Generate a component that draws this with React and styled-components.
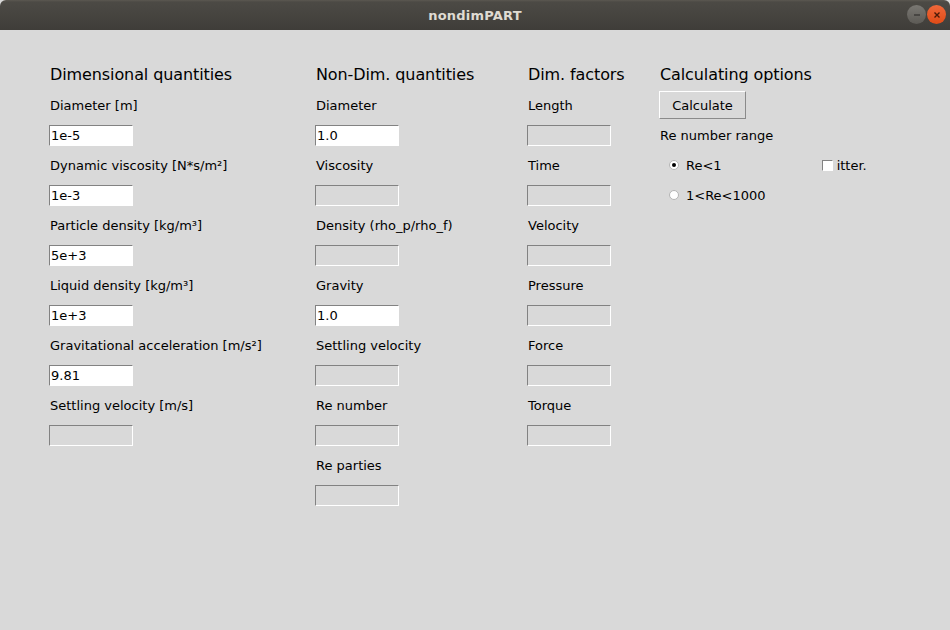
import styled, { createGlobalStyle } from 'styled-components';

const GlobalStyle = createGlobalStyle`
  html, body {
    margin: 0;
    padding: 0;
    background: #d9d9d9;
  }
  body {
    font-family: "DejaVu Sans", "Liberation Sans", sans-serif;
    color: #000;
  }
`;

const Window = styled.div`
  width: 950px;
  height: 630px;
  display: flex;
  flex-direction: column;
  background: #d9d9d9;
  overflow: hidden;
`;

const TitleBar = styled.div`
  height: 30px;
  flex: none;
  position: relative;
  display: flex;
  align-items: center;
  justify-content: center;
  background: linear-gradient(#5b5851 0px, #4c4a45 2px, #3f3d39 30px);
  border-radius: 6px 6px 0 0;
`;

const Title = styled.span`
  font-size: 13px;
  font-weight: bold;
  color: #dfdbd2;
  letter-spacing: 0.2px;
`;

const Controls = styled.div`
  position: absolute;
  right: 4px;
  top: 5px;
  display: flex;
  gap: 1px;
`;

const CircleButton = styled.div`
  width: 19px;
  height: 19px;
  border-radius: 50%;
  background: ${(p) => (p.close ? 'linear-gradient(#f0683a, #df4b17)' : 'linear-gradient(#7a7873, #5c5a55)')};
  display: flex;
  align-items: center;
  justify-content: center;
`;

const Body = styled.div`
  flex: 1;
  display: flex;
  padding: 30px 0 0 50px;
`;

const Column = styled.div`
  width: ${(p) => p.width}px;
  display: flex;
  flex-direction: column;
  flex: none;
`;

const Heading = styled.div`
  height: 30px;
  line-height: 30px;
  font-size: 16px;
  letter-spacing: -0.1px;
`;

const Label = styled.div`
  height: 30px;
  line-height: 32px;
  font-size: 13px;
  white-space: pre;
`;

const FieldRow = styled.div`
  height: 30px;
  display: flex;
  align-items: center;
`;

const Entry = styled.input`
  box-sizing: border-box;
  width: 84px;
  height: 21px;
  margin: 0 0 0 -1px;
  padding: 0 1px;
  font-family: "DejaVu Sans", sans-serif;
  font-size: 13px;
  color: #000;
  background: ${(p) => (p.disabled ? '#d9d9d9' : '#ffffff')};
  border-style: solid;
  border-width: 1px;
  border-color: #828282 #ffffff #ffffff #828282;
  outline: none;
`;

const ButtonRow = styled.div`
  height: 30px;
  display: flex;
  align-items: center;
`;

const Button = styled.button`
  box-sizing: border-box;
  width: 87px;
  height: 28px;
  margin-left: -1px;
  font-family: "DejaVu Sans", sans-serif;
  font-size: 13px;
  color: #000;
  background: #d9d9d9;
  border-style: solid;
  border-width: 1px;
  border-color: #ffffff #8a8a8a #8a8a8a #ffffff;
  padding: 0;
`;

const OptionRow = styled.div`
  height: 30px;
  display: flex;
  align-items: center;
  font-size: 13px;
  padding-left: 9px;
`;

const Radio = styled.span`
  box-sizing: border-box;
  width: 10px;
  height: 10px;
  border-radius: 50%;
  background: #fff;
  border: 1px solid #b5b5b5;
  display: inline-flex;
  align-items: center;
  justify-content: center;
  margin-right: 7px;
  &::after {
    content: '';
    display: ${(p) => (p.checked ? 'block' : 'none')};
    width: 4px;
    height: 4px;
    border-radius: 50%;
    background: #000;
  }
`;

const Check = styled.span`
  margin-left: 100px;
  display: flex;
  align-items: center;
  &::before {
    content: '';
    box-sizing: border-box;
    width: 11px;
    height: 11px;
    background: #fff;
    border-style: solid;
    border-width: 1px;
    border-color: #828282 #ffffff #ffffff #828282;
    margin-right: 4px;
  }
`;

const dimensional = [
  ['Diameter [m]', '1e-5'],
  ['Dynamic viscosity [N*s/m²]', '1e-3'],
  ['Particle density [kg/m³]', '5e+3'],
  ['Liquid density [kg/m³]', '1e+3'],
  ['Gravitational acceleration [m/s²]', '9.81'],
  ['Settling velocity [m/s]', null],
];

const nondim = [
  ['Diameter', '1.0'],
  ['Viscosity', null],
  ['Density (rho_p/rho_f)', null],
  ['Gravity', '1.0'],
  ['Settling velocity', null],
  ['Re number', null],
  ['Re parties', null],
];

const factors = [
  ['Length', null],
  ['Time', null],
  ['Velocity', null],
  ['Pressure', null],
  ['Force', null],
  ['Torque', null],
];

function Fields({ items }) {
  return items.map(([label, value]) => (
    <div key={label}>
      <Label>{label}</Label>
      <FieldRow>
        {value === null ? <Entry disabled defaultValue="" /> : <Entry defaultValue={value} />}
      </FieldRow>
    </div>
  ));
}

export default function App() {
  return (
    <Window>
      <GlobalStyle />
      <TitleBar>
        <Title>nondimPART</Title>
        <Controls>
          <CircleButton>
            <svg width="10" height="10" viewBox="0 0 10 10">
              <path d="M2 5h6" stroke="#3a3936" strokeWidth="1.4" />
            </svg>
          </CircleButton>
          <CircleButton close>
            <svg width="10" height="10" viewBox="0 0 10 10">
              <path d="M2.5 2.5l5 5M7.5 2.5l-5 5" stroke="#4a1a08" strokeWidth="1.4" />
            </svg>
          </CircleButton>
        </Controls>
      </TitleBar>
      <Body>
        <Column width={266}>
          <Heading>Dimensional quantities</Heading>
          <Fields items={dimensional} />
        </Column>
        <Column width={212}>
          <Heading>Non-Dim. quantities</Heading>
          <Fields items={nondim} />
        </Column>
        <Column width={132}>
          <Heading>Dim. factors</Heading>
          <Fields items={factors} />
        </Column>
        <Column width={240}>
          <Heading>Calculating options</Heading>
          <ButtonRow>
            <Button>Calculate</Button>
          </ButtonRow>
          <Label>Re number range</Label>
          <OptionRow>
            <Radio checked />
            Re&lt;1
            <Check>itter.</Check>
          </OptionRow>
          <OptionRow>
            <Radio />
            1&lt;Re&lt;1000
          </OptionRow>
        </Column>
      </Body>
    </Window>
  );
}
